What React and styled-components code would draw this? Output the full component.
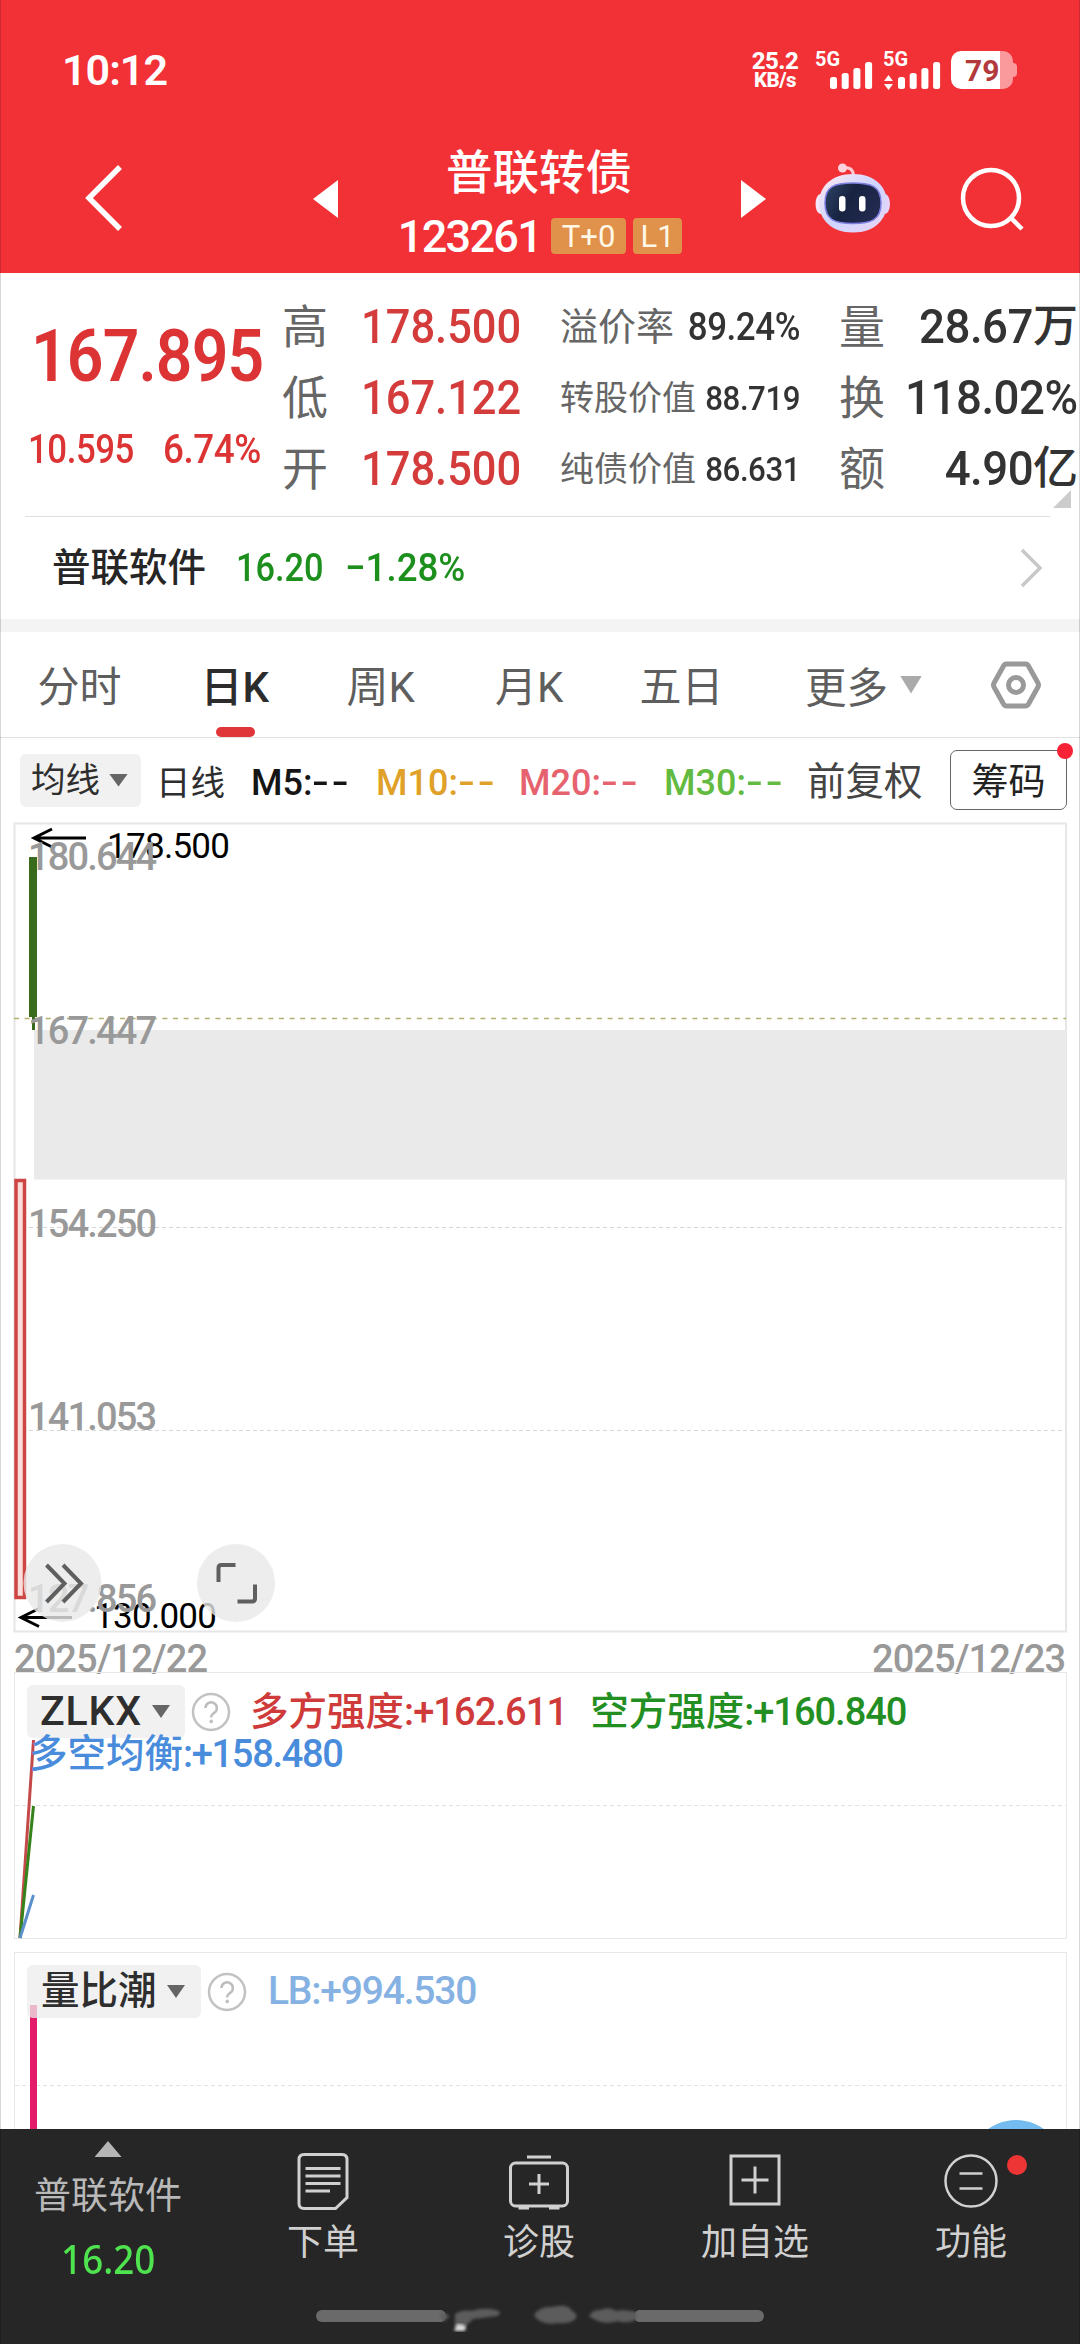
import React from "react";
import styled, { createGlobalStyle } from "styled-components";

const quotes = [
    { label: "高", value: "178.500", sub: "溢价率", subValue: "89.24%", big: true, right: "量", rightValue: "28.67", unit: "万" },
    { label: "低", value: "167.122", sub: "转股价值", subValue: "88.719", right: "换", rightValue: "118.02%" },
    { label: "开", value: "178.500", sub: "纯债价值", subValue: "86.631", right: "额", rightValue: "4.90", unit: "亿" },
];

const tabs = [
    { name: "分时", width: 163 },
    { name: "日K", width: 146, active: true },
    { name: "周K", width: 148.5 },
    { name: "月K", width: 144.5 },
    { name: "五日", width: 159.5 },
];

const averages = [
    { text: "M5:", color: "#151515", width: 125 },
    { text: "M10:", color: "#dfa127", width: 143 },
    { text: "M20:", color: "#e5626e", width: 145 },
    { text: "M30:", color: "#62bb40", width: 143 },
];

const Question = () => (
    <svg width="40" height="40" viewBox="0 0 40 40">
        <circle cx="20" cy="20" r="18" fill="none" stroke="#c2c2c2" strokeWidth="2.5" />
        <path d="M14.5 16a5.7 5.7 0 1 1 9.2 4.4c-2.2 1.7-3.5 2.6-3.5 5" fill="none" stroke="#bdbdbd" strokeWidth="2.5" />
        <circle cx="20.2" cy="29.4" r="1.8" fill="#bdbdbd" />
    </svg>
);

const Signal = ({ arrows }) => (
    <svg width="60" height="42" viewBox="0 0 60 42">
        <text x="0" y="17" fontSize="20" fontWeight="700" fill="#fff" textLength="25" lengthAdjust="spacingAndGlyphs">5G</text>
        {arrows && <path d="M5.5 26l4.5 6h-9zM5.5 41l4.5-6h-9z" fill="#fff" />}
        {[28, 24, 19, 13].map((y, i) => (
            <rect key={y} x={15 + i * 11.7} y={y} width="7" height={40 - y} rx="2.5" fill="#fff" />
        ))}
    </svg>
);

const Robot = () => (
    <svg width="76" height="72" viewBox="0 0 76 72">
        <defs>
            <linearGradient id="shell" x1="0" y1="0" x2="1" y2="1">
                <stop offset="0" stopColor="#ffe9ef" />
                <stop offset="0.5" stopColor="#cfd6ff" />
                <stop offset="1" stopColor="#e9d3f4" />
            </linearGradient>
            <linearGradient id="visor" x1="0" y1="0" x2="1" y2="0.4">
                <stop offset="0" stopColor="#2e4465" />
                <stop offset="0.5" stopColor="#182341" />
                <stop offset="1" stopColor="#22294f" />
            </linearGradient>
        </defs>
        <path d="M28 5c6-1 10 1 10.500 7" fill="none" stroke="#ffc9d1" strokeWidth="3" />
        <circle cx="27.500" cy="5" r="4.500" fill="#ffd3db" />
        <ellipse cx="5.500" cy="41" rx="5" ry="10" fill="#f3e6fb" />
        <ellipse cx="70" cy="41" rx="5" ry="10" fill="#e8d3f8" />
        <path d="M38 11c22 0 34 13 34 29S60 69.500 38 69.500 4 56 4 40s12-29 34-29z" fill="url(#shell)" />
        <path d="M38 20c18 0 28 3 28 20S56 60.500 38 60.500 10 57 10 40s10-20 28-20z" fill="url(#visor)" stroke="#7d7fe0" strokeWidth="1.500" />
        <rect x="24" y="33" width="6.500" height="15.500" rx="3.200" fill="#fff" />
        <rect x="44" y="33" width="6.500" height="15.500" rx="3.200" fill="#fff" />
    </svg>
);

const KLine = () => (
    <svg width="1080" height="850" viewBox="0 822 1080 850">
        <rect x="14.5" y="823.5" width="1051.500" height="808" fill="none" stroke="#e6e6e6" strokeWidth="2" />
        <path d="M15 1227.500H1066M15 1430.500H1066" stroke="#d6d6d6" strokeWidth="1" strokeDasharray="4 3" />
        <rect x="34" y="1030" width="1032" height="149.500" fill="#eaeaea" />
        <path d="M14 1018.500H1066" stroke="#b3b070" strokeWidth="1.500" strokeDasharray="5 5.600" />
        <rect x="29" y="857" width="8" height="160" fill="#386b1c" />
        <rect x="32" y="1017" width="3" height="13" fill="#386b1c" />
        <rect x="16" y="1180.500" width="8.500" height="417" fill="#fbdedb" stroke="#cd4643" strokeWidth="3.500" />
        <g fill="none" stroke="#000" strokeWidth="3">
            <path d="M86 838H34M52 829L34 838L52 847" />
            <path d="M72 1617.500H21M39 1608.500L21 1617.500L39 1626.500" />
        </g>
        <g fill="#000" fontSize="35">
            <text x="107" y="858" textLength="123">178.500</text>
            <text x="94" y="1628" textLength="123">130.000</text>
        </g>
        <g fill="#999" fontSize="38" fontWeight="500">
            <text x="28" y="870" textLength="129">180.644</text>
            <text x="28" y="1044" textLength="129">167.447</text>
            <text x="28" y="1237" textLength="129">154.250</text>
            <text x="28" y="1430" textLength="129">141.053</text>
            <text x="28" y="1612" textLength="129">127.856</text>
            <text x="14" y="1672" textLength="194">2025/12/22</text>
            <text x="872" y="1672" textLength="194">2025/12/23</text>
        </g>
        <g fill="#e8e8e8" fillOpacity="0.8">
            <circle cx="62.500" cy="1583" r="39" />
            <circle cx="236" cy="1583" r="39" />
        </g>
        <g fill="none" stroke="#5f5f5f" strokeWidth="4">
            <path d="M46.500 1565l18 18.500l-18 18.500M63 1565l18 18.500l-18 18.500" />
            <path d="M218.500 1582v-14q0-3 3-3h14M237.500 1601.500h14.500q3 0 3-3v-14" />
        </g>
    </svg>
);

const App = () => {
    return (
        <Page>
            <GlobalStyle />
            <Header>
                <StatusBar>
                    <Clock>10:12</Clock>
                    <NetSpeed><span>25.2</span><small>KB/s</small></NetSpeed>
                    <Signal />
                    <Signal arrows />
                    <Battery>79</Battery>
                </StatusBar>
                <TitleBar>
                    <svg width="40" height="70" viewBox="0 0 40 70">
                        <path d="M37 3L6 34L37 65" fill="none" stroke="#fff" strokeWidth="5.500" />
                    </svg>
                    <svg width="26" height="38" viewBox="0 0 26 38"><path d="M25 0V38L0 19z" fill="#fff" /></svg>
                    <Name>
                        <h1>普联转债</h1>
                        <p>
                            <Num $size={45} $ls={-1.7}>123261</Num>
                            <Badge $width={75}>T+0</Badge>
                            <Badge $width={49}>L1</Badge>
                        </p>
                    </Name>
                    <svg width="26" height="38" viewBox="0 0 26 38"><path d="M1 0V38L26 19z" fill="#fff" /></svg>
                    <Robot />
                    <svg width="64" height="64" viewBox="0 0 64 64">
                        <g fill="none" stroke="#fff" strokeWidth="4.500">
                            <circle cx="30" cy="31" r="28" />
                            <path d="M50 51L61 62" />
                        </g>
                    </svg>
                </TitleBar>
            </Header>

            <QuotePanel>
                <Price>
                    <Num $size={73} $ls={-1} $sx={0.88} $weight={600}>167.895</Num>
                    <div>
                        <Num $size={40} $ls={-0.5} $sx={0.87}>10.595</Num>
                        <Num $size={40} $ls={-0.5} $sx={0.92}>6.74%</Num>
                    </div>
                </Price>
                <QuoteGrid>
                    {quotes.map((q) => (
                        <React.Fragment key={q.label}>
                            <Label $size={46}>{q.label}</Label>
                            <Num $size={48} $sx={0.905} $color="#d43c3c">{q.value}</Num>
                            <SubQuote>
                                <Label $size={q.big ? 38 : 34}>{q.sub}</Label>
                                <Num $size={q.big ? 38 : 34} $ls={-0.5} $sx={0.92} $right $color="#333">{q.subValue}</Num>
                            </SubQuote>
                            <Label $size={46}>{q.right}</Label>
                            <RightValue>
                                <Num $size={48} $ls={-0.5} $sx={0.95} $right $color="#333">{q.rightValue}</Num>
                                {q.unit && <b>{q.unit}</b>}
                            </RightValue>
                        </React.Fragment>
                    ))}
                </QuoteGrid>
                <Corner />
            </QuotePanel>

            <StockRow>
                <b>普联软件</b>
                <Num $size={39} $sx={0.88} $color="#1c8f1c">16.20</Num>
                <Num $size={39} $sx={0.94} $color="#1c8f1c">−1.28%</Num>
                <svg width="24" height="40" viewBox="0 0 24 40">
                    <path d="M3 2L21 20L3 38" fill="none" stroke="#c8c8c8" strokeWidth="3.500" />
                </svg>
            </StockRow>

            <Tabs>
                {tabs.map((t) => (
                    <Tab key={t.name} $width={t.width} $active={t.active}>{t.name}</Tab>
                ))}
                <More>更多<Caret $w={22} $h={18} $color="#aaa" /></More>
                <svg width="52" height="50" viewBox="0 0 52 50">
                    <g fill="none" stroke="#999" strokeWidth="5" strokeLinejoin="round">
                        <path d="M16.500 4h19q2 0 3 2l9.500 17q1 2 0 4l-9.500 17q-1 2-3 2h-19q-2 0-3-2L4 27q-1-2 0-4l9.500-17q1-2 3-2z" />
                        <circle cx="26" cy="25" r="7.500" />
                    </g>
                </svg>
            </Tabs>

            <MaRow>
                <Picker $width={121} $size={34.5} $pad={11} $light>均线<Caret $w={19} $h={13} $color="#666" /></Picker>
                <MaTitle>日线</MaTitle>
                {averages.map((m) => (
                    <Average key={m.text} $width={m.width} $color={m.color}>{m.text}<em>--</em></Average>
                ))}
                <Adjust>前复权</Adjust>
                <ChipButton>筹码</ChipButton>
            </MaRow>

            <KLine />

            <Indicator $height={267}>
                <svg width="1080" height="267" viewBox="0 1672 1080 267">
                    <path d="M15 1805.500H1066" stroke="#e2e2e2" strokeDasharray="4 3" />
                    <g fill="none" strokeWidth="3">
                        <path d="M20 1938L33.500 1740" stroke="#c34a48" />
                        <path d="M20 1938L33.500 1806" stroke="#36831c" />
                        <path d="M20 1938L33.500 1895" stroke="#5b8fcb" />
                    </g>
                </svg>
                <Legend>
                    <Picker $width={158} $size={41} $pad={13} $ls={0.8}>ZLKX<Caret $w={18} $h={13} $color="#666" /></Picker>
                    <Question />
                    <Value $color="#cf3a3a" $left={19}>多方强度<Num $size={38} $ls={-0.9}>:+162.611</Num></Value>
                    <Value $color="#238f23" $left={23}>空方强度<Num $size={38} $ls={-1}>:+160.840</Num></Value>
                </Legend>
                <Legend2>
                    <Value $color="#4a8cdc" $left={0}>多空均衡<Num $size={38} $ls={-1.3}>:+158.480</Num></Value>
                </Legend2>
            </Indicator>

            <Indicator $height={177} $top={13} $open>
                <svg width="1080" height="177" viewBox="0 1952 1080 177">
                    <path d="M15 2085.500H1066" stroke="#e2e2e2" strokeDasharray="4 3" />
                    <rect x="30" y="2005" width="7" height="130" fill="#e5196a" />
                    <circle cx="1016" cy="2168" r="48" fill="#74bcf0" />
                </svg>
                <Legend>
                    <Picker $width={174} $size={38.5} $pad={14}>量比潮<Caret $w={18} $h={13} $color="#666" /></Picker>
                    <Question />
                    <Value $color="#85b1e3" $left={21}><Num $size={39} $ls={-1.2}>LB:+994.530</Num></Value>
                </Legend>
            </Indicator>

            <BottomBar>
                <Stock>
                    <i />
                    <span>普联软件</span>
                    <b>16.20</b>
                </Stock>
                <NavItem>
                    <svg width="60" height="60" viewBox="0 0 60 60">
                        <g fill="none" stroke="#d0d0d0" strokeWidth="3">
                            <path d="M11 3.500h38q5 0 5 5v38L42.500 57.500H11q-5 0-5-5v-44q0-5 5-5z" />
                            <path d="M12.500 17.500H47.500M12.500 25H47.500M12.500 32.500H47.500M12.500 40H37" />
                        </g>
                    </svg>
                    下单
                </NavItem>
                <NavItem>
                    <svg width="60" height="60" viewBox="0 0 60 60">
                        <g fill="none" stroke="#d0d0d0" strokeWidth="3">
                            <rect x="1.500" y="12" width="57" height="43" rx="5" />
                            <path d="M18 6H42M30 23V43M20 33H40M9.500 57H20M40 57H50.500" />
                        </g>
                    </svg>
                    诊股
                </NavItem>
                <NavItem>
                    <svg width="60" height="60" viewBox="0 0 60 60">
                        <g fill="none" stroke="#d0d0d0" strokeWidth="3">
                            <rect x="6" y="5" width="48" height="48" />
                            <path d="M30 15.500V42.500M16.500 29H43.500" />
                        </g>
                    </svg>
                    加自选
                </NavItem>
                <NavItem $dot>
                    <svg width="60" height="60" viewBox="0 0 60 60">
                        <g fill="none" stroke="#d0d0d0" strokeWidth="2.500">
                            <circle cx="30" cy="30" r="25.500" />
                            <path d="M18.500 22.500H41.500M18.500 37.500H41.500" />
                        </g>
                    </svg>
                    功能
                </NavItem>
                <HomeBar>
                    <svg width="448" height="44" viewBox="0 0 448 44">
                        <rect x="0" y="16" width="130" height="12" rx="6" fill="#6a6a6a" />
                        <rect x="318" y="16" width="130" height="12" rx="6" fill="#6a6a6a" />
                        <rect x="118" y="16" width="8" height="12" fill="#6a6a6a" />
                        <rect x="322" y="16" width="12" height="12" fill="#6a6a6a" />
                        {/* worn middle part of the bar */}
                        <g fill="#5c5c5c" filter="url(#smudge)">
                            <path d="M124 18l10 4l-7 6zM139 20q8-5 17-3q10-4 24-1q8 3 1 6l-24 3q-6 6-12 10l-6-2z" />
                            <path d="M218 21q6-9 18-8q16-4 20 4q8 4 2 9q-6 4-16 3q-18 3-24-8z" />
                            <path d="M273 22q4-7 12-6q8-4 15 1q9-2 20 1v8q-10 4-18 1q-16 5-29-5z" />
                        </g>
                        <path d="M138 37l3-7q6 0 9 2l-1 5z" fill="#d8d8d8" filter="url(#smudge)" />
                        <defs>
                            <filter id="smudge"><feGaussianBlur stdDeviation="1.6" /></filter>
                        </defs>
                    </svg>
                </HomeBar>
            </BottomBar>
        </Page>
    );
};

const GlobalStyle = createGlobalStyle`
    * { box-sizing: border-box; }
    body {
        margin: 0;
        background: #fff;
        font-family: Roboto, "Noto Sans CJK SC", sans-serif;
    }
    h1, p { margin: 0; }
    svg { display: block; flex-shrink: 0; overflow: visible; }
`;

const Page = styled.div`
    position: relative;
    width: 1080px;
    height: 2344px;
    overflow: hidden;
    background: #fff;
    &::after {
        content: "";
        position: absolute;
        inset: 0;
        border: solid rgba(0, 0, 0, 0.16);
        border-width: 0 1px;
        pointer-events: none;
    }
`;

const Num = styled.span`
    font-family: Roboto, sans-serif;
    font-size: ${(p) => p.$size}px;
    font-weight: ${(p) => p.$weight || 500};
    letter-spacing: ${(p) => p.$ls || 0}px;
    line-height: 1;
    color: ${(p) => p.$color || "inherit"};
    white-space: nowrap;
    ${(p) => p.$sx && `transform: scaleX(${p.$sx});`}
    transform-origin: ${(p) => (p.$right ? "right" : "left")} center;
`;

const Label = styled.span`
    font-size: ${(p) => p.$size}px;
    line-height: 1;
    color: #666;
    white-space: nowrap;
`;

const Caret = styled.i`
    width: ${(p) => p.$w}px;
    height: ${(p) => p.$h}px;
    background: ${(p) => p.$color};
    clip-path: polygon(0 0, 100% 0, 50% 100%);
`;

const Header = styled.header`
    height: 273px;
    background: #f23136;
    color: #fff;
`;

const StatusBar = styled.div`
    display: flex;
    align-items: center;
    height: 130px;
    padding: 10px 67px 0 62px;
`;

const Clock = styled.span`
    flex: 1;
    font-size: 43px;
    font-weight: 600;
    letter-spacing: -1px;
`;

const NetSpeed = styled.div`
    display: flex;
    flex-direction: column;
    align-items: center;
    width: 50px;
    margin-right: 15px;
    padding-top: 1px;
    font-size: 24px;
    font-weight: 800;
    line-height: 19px;
    letter-spacing: -0.5px;
    small {
        font-size: 20.5px;
    }
    & + svg {
        margin-right: 8px;
    }
`;

const Battery = styled.div`
    position: relative;
    width: 62px;
    height: 38px;
    margin-left: 8px;
    padding-left: 14px;
    border-radius: 10px;
    background: linear-gradient(90deg, #fff 49px, #fa9a9c 49px);
    color: #b23a3c;
    font-size: 30px;
    font-weight: 700;
    line-height: 39px;
    &::after {
        content: "";
        position: absolute;
        right: -4px;
        top: 12px;
        width: 4px;
        height: 14px;
        border-radius: 0 4px 4px 0;
        background: #fa9a9c;
    }
`;

const TitleBar = styled.div`
    display: grid;
    grid-template-columns: 230px 69px 358px 75px 146px 64px;
    align-items: center;
    height: 138px;
    padding-left: 83px;
`;

const Name = styled.div`
    display: flex;
    flex-direction: column;
    align-items: center;
    margin-left: -44px;
    padding-top: 12px;
    h1 {
        font-size: 46.5px;
        font-weight: 500;
        line-height: 62px;
    }
    p {
        display: flex;
        align-items: center;
        gap: 7px;
        height: 64px;
        padding-left: 2px;
    }
    p > :first-child {
        margin-right: 3px;
    }
`;

const Badge = styled.span`
    width: ${(p) => p.$width}px;
    height: 36px;
    border-radius: 4px;
    background: #e0914a;
    color: #fff8e6;
    font-size: 31px;
    line-height: 37px;
    text-align: center;
`;

const QuotePanel = styled.section`
    position: relative;
    display: flex;
    height: 244px;
    padding-top: 18px;
    &::after {
        content: "";
        position: absolute;
        left: 25px;
        right: 30px;
        bottom: 0;
        height: 1px;
        background: #dfdfdf;
    }
`;

const Price = styled.div`
    display: flex;
    flex-direction: column;
    width: 282px;
    padding: 29px 0 0 31px;
    color: #dc3434;
    div {
        display: flex;
        gap: 13px;
        margin: 37px 0 0 -3px;
    }
`;

const QuoteGrid = styled.div`
    display: grid;
    grid-template-columns: 79px 199px 279px 46px 193px;
    grid-auto-rows: 71px;
    align-items: center;
`;

const SubQuote = styled.div`
    display: flex;
    align-items: center;
    justify-content: space-between;
    width: 240px;
`;

const RightValue = styled.div`
    display: flex;
    align-items: center;
    justify-content: flex-end;
    b {
        color: #333;
        font-size: 45px;
        font-weight: 500;
        line-height: 1;
    }
`;

const Corner = styled.i`
    position: absolute;
    right: 9px;
    bottom: 9px;
    width: 18px;
    height: 18px;
    background: #ccc;
    clip-path: polygon(100% 0, 100% 100%, 0 100%);
`;

const StockRow = styled.div`
    display: flex;
    align-items: center;
    height: 115px;
    padding: 0 37px 0 52px;
    border-bottom: 13px solid #f4f4f4;
    b {
        margin: -8px 30px 0 0;
        color: #262626;
        font-size: 38.5px;
        font-weight: 500;
    }
    span + span {
        margin-left: 9px;
    }
    svg {
        margin-left: auto;
    }
`;

const Tabs = styled.nav`
    display: flex;
    align-items: center;
    height: 106px;
    padding-left: 37.5px;
    border-bottom: 1px solid #e2e2e2;
`;

const Tab = styled.div`
    position: relative;
    width: ${(p) => p.$width}px;
    height: 105px;
    color: ${(p) => (p.$active ? "#2c2c2c" : "#5e5e5e")};
    font-size: 42px;
    font-weight: ${(p) => (p.$active ? 500 : 400)};
    line-height: 111px;
    ${(p) => p.$active && `
        &::after {
            content: "";
            position: absolute;
            left: 15px;
            bottom: 0;
            width: 39px;
            height: 10px;
            border-radius: 5px;
            background: #e03639;
        }
    `}
`;

const More = styled.div`
    display: flex;
    align-items: center;
    gap: 12px;
    width: 191px;
    padding-left: 6px;
    color: #5e5e5e;
    font-size: 41.5px;
`;

const MaRow = styled.div`
    display: flex;
    align-items: center;
    height: 84px;
    padding: 0 13px 0 20px;
`;

const Picker = styled.div`
    display: flex;
    align-items: center;
    justify-content: space-between;
    flex-shrink: 0;
    width: ${(p) => p.$width}px;
    height: 53px;
    padding: 0 ${(p) => p.$pad + 2}px 0 ${(p) => p.$pad}px;
    border-radius: 6px;
    background: rgba(236, 236, 236, 0.75);
    color: #2e2e2e;
    font-size: ${(p) => p.$size}px;
    font-weight: ${(p) => (p.$light ? 400 : 500)};
    letter-spacing: ${(p) => p.$ls || 0}px;
    line-height: 1;
`;

const MaTitle = styled.span`
    width: 94px;
    padding-left: 15px;
    color: #2e2e2e;
    font-size: 34.5px;
`;

const Average = styled.span`
    width: ${(p) => p.$width}px;
    padding: 5px 0 0 16px;
    color: ${(p) => p.$color};
    font-size: 36px;
    font-weight: 500;
    white-space: nowrap;
    em {
        display: inline-block;
        font-style: normal;
        letter-spacing: 2px;
        transform: scaleX(1.38);
        transform-origin: left;
    }
`;

const Adjust = styled.span`
    margin: -4px 0 0 16px;
    color: #444;
    font-size: 38.5px;
    white-space: nowrap;
`;

const ChipButton = styled.div`
    position: relative;
    width: 117px;
    height: 60px;
    margin-left: auto;
    border: 1.5px solid #666;
    border-radius: 7px;
    color: #222;
    font-size: 37px;
    line-height: 63px;
    text-align: center;
    &::after {
        content: "";
        position: absolute;
        right: -7px;
        top: -8px;
        width: 16px;
        height: 16px;
        border-radius: 50%;
        background: #f82236;
    }
`;

/* 副图指标 */
const Indicator = styled.section`
    position: relative;
    height: ${(p) => p.$height}px;
    margin-top: ${(p) => p.$top || 0}px;
    & > svg {
        position: absolute;
        left: 0;
        top: 0;
    }
    &::before {
        content: "";
        position: absolute;
        inset: 0 13px 0 14px;
        border: 1.5px solid #e8e8e8;
        ${(p) => p.$open && "border-bottom: none;"}
    }
`;

const Legend = styled.div`
    position: relative;
    display: flex;
    align-items: center;
    padding: 13px 0 0 27px;
    & > svg {
        margin-left: 6px;
    }
`;

const Legend2 = styled(Legend)`
    padding: 0 0 0 29px;
    margin-top: -4px;
`;

const Value = styled.div`
    display: flex;
    align-items: center;
    margin-left: ${(p) => p.$left}px;
    color: ${(p) => p.$color};
    font-size: 38.5px;
    font-weight: 500;
    line-height: 40px;
`;

const BottomBar = styled.footer`
    position: relative;
    display: grid;
    grid-template-columns: repeat(5, 216px);
    height: 215px;
    background: #262626;
`;

const Stock = styled.div`
    display: flex;
    flex-direction: column;
    align-items: center;
    padding-top: 12px;
    color: #b9b9b9;
    font-size: 37px;
    i {
        width: 27px;
        height: 16px;
        background: #b5b5b5;
        clip-path: polygon(50% 0, 100% 100%, 0 100%);
    }
    span {
        margin-top: 18px;
        line-height: 44px;
    }
    b {
        margin-top: 18px;
        color: #4fe34f;
        font-family: "Noto Sans", sans-serif;
        font-size: 40px;
        font-weight: 500;
        line-height: 44px;
        transform: scaleX(0.92);
    }
`;

const NavItem = styled.div`
    position: relative;
    display: flex;
    flex-direction: column;
    align-items: center;
    padding: 22px 2px 0 0;
    color: #d0d0d0;
    font-size: 36px;
    line-height: 64px;
    ${(p) => p.$dot && `
        &::after {
            content: "";
            position: absolute;
            left: 143px;
            top: 26px;
            width: 20px;
            height: 20px;
            border-radius: 50%;
            background: #ee3535;
        }
    `}
`;

const HomeBar = styled.div`
    position: absolute;
    left: 316px;
    bottom: 6px;
`;

export default App;
